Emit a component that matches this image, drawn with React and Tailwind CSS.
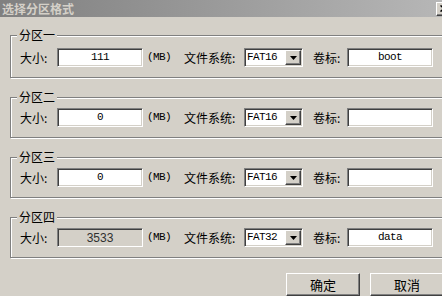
import React from 'react';

const partitions = [
    { name: '分区一', size: '111', fs: 'FAT16', label: 'boot', pt: 'pt-[12px]' },
    { name: '分区二', size: '0', fs: 'FAT16', label: '', pt: 'pt-[10px]' },
    { name: '分区三', size: '0', fs: 'FAT16', label: '', pt: 'pt-[10px]' },
    { name: '分区四', size: '3533', fs: 'FAT32', label: 'data', pt: 'pt-[10px]', disabled: true },
];

const cjk = "font-['Noto_Sans_CJK_SC',sans-serif]";
const mono = "font-['Liberation_Mono','Noto_Sans_CJK_SC',monospace] text-[11px] tracking-[-0.6px]";
const sunken = 'border border-t-[#808080] border-l-[#808080] border-b-white border-r-white shadow-[inset_1px_1px_0_#404040,inset_-1px_-1px_0_#d4d0c8]';
const raised = 'border border-t-white border-l-white border-b-[#404040] border-r-[#404040] shadow-[inset_-1px_-1px_0_#808080]';

const Select = ({ value }) => (
    <div className={`w-[59px] h-[19px] bg-white flex items-center ${sunken}`}>
        <span className={`flex-1 pl-[2px] text-black ${mono}`}>{value}</span>
        <div className={`w-[16px] h-[15px] mr-[1px] bg-[#d4d0c8] flex items-center justify-center ${raised}`}>
            <svg width="7" height="4" viewBox="0 0 7 4">
                <path d="M0 0h7L3.5 4z" fill="#000" />
            </svg>
        </div>
    </div>
);

const GroupBox = ({ p }) => (
    <div className={`relative ml-[10px] mr-[10px] border border-[#808080] shadow-[inset_1px_1px_0_#fff,1px_1px_0_#fff] ${p.pt} pb-[10px] pl-[9px]`}>
        <span className={`absolute -top-[8px] left-[6px] px-[2px] bg-[#d4d0c8] text-[12px] leading-[14px] text-black ${cjk}`}>
            {p.name}
        </span>
        <div className={`flex items-center text-[12px] text-black ${cjk}`}>
            <span className="w-[37px]">大小:</span>
            <div className={`w-[86px] h-[19px] flex items-center justify-center ${sunken} ${p.disabled ? 'bg-[#d4d0c8]' : 'bg-white'}`}>
                {p.disabled ? (
                    <span className="font-['Liberation_Sans',sans-serif] text-[12px] text-[#303030]">{p.size}</span>
                ) : (
                    <span className={mono}>{p.size}</span>
                )}
            </div>
            <span className={`w-[41px] pl-[4px] ${mono}`}>(MB)</span>
            <span className="w-[60px]">文件系统:</span>
            <Select value={p.fs} />
            <span className="w-[34px] ml-[10px]">卷标:</span>
            <div className={`w-[86px] h-[19px] bg-white flex items-center justify-center ${sunken}`}>
                <span className={mono}>{p.label}</span>
            </div>
        </div>
    </div>
);

const App = () => {
    return (
        <div className="w-[442px] h-[296px] overflow-hidden bg-[#d4d0c8]">
            <div className="w-[454px]">
                {/* Title bar */}
                <div className="h-[17px] flex items-center justify-between bg-gradient-to-r from-[#808080] to-[#b8b8b8]">
                    <span className={`pl-[2px] text-[12px] font-bold text-[#d4d0c8] leading-none ${cjk}`}>选择分区格式</span>
                    <div className={`w-[16px] h-[14px] mr-[2px] bg-[#d4d0c8] flex items-center justify-center ${raised}`}>
                        <svg width="8" height="7" viewBox="0 0 8 7">
                            <path d="M0.5 0.5l7 6M7.5 0.5l-7 6" stroke="#000" strokeWidth="1.5" />
                        </svg>
                    </div>
                </div>

                {/* Partitions */}
                <div className="pt-[18px] flex flex-col gap-[19px]">
                    {partitions.map((p) => (
                        <GroupBox key={p.name} p={p} />
                    ))}
                </div>

                {/* Buttons */}
                <div className="flex justify-end gap-[10px] pr-[10px] mt-[15px]">
                    <button className={`w-[74px] h-[23px] bg-[#d4d0c8] text-[13px] text-black ${cjk} ${raised}`}>确定</button>
                    <button className={`w-[74px] h-[23px] bg-[#d4d0c8] text-[13px] text-black ${cjk} ${raised}`}>取消</button>
                </div>
            </div>
        </div>
    );
};

export default App;
